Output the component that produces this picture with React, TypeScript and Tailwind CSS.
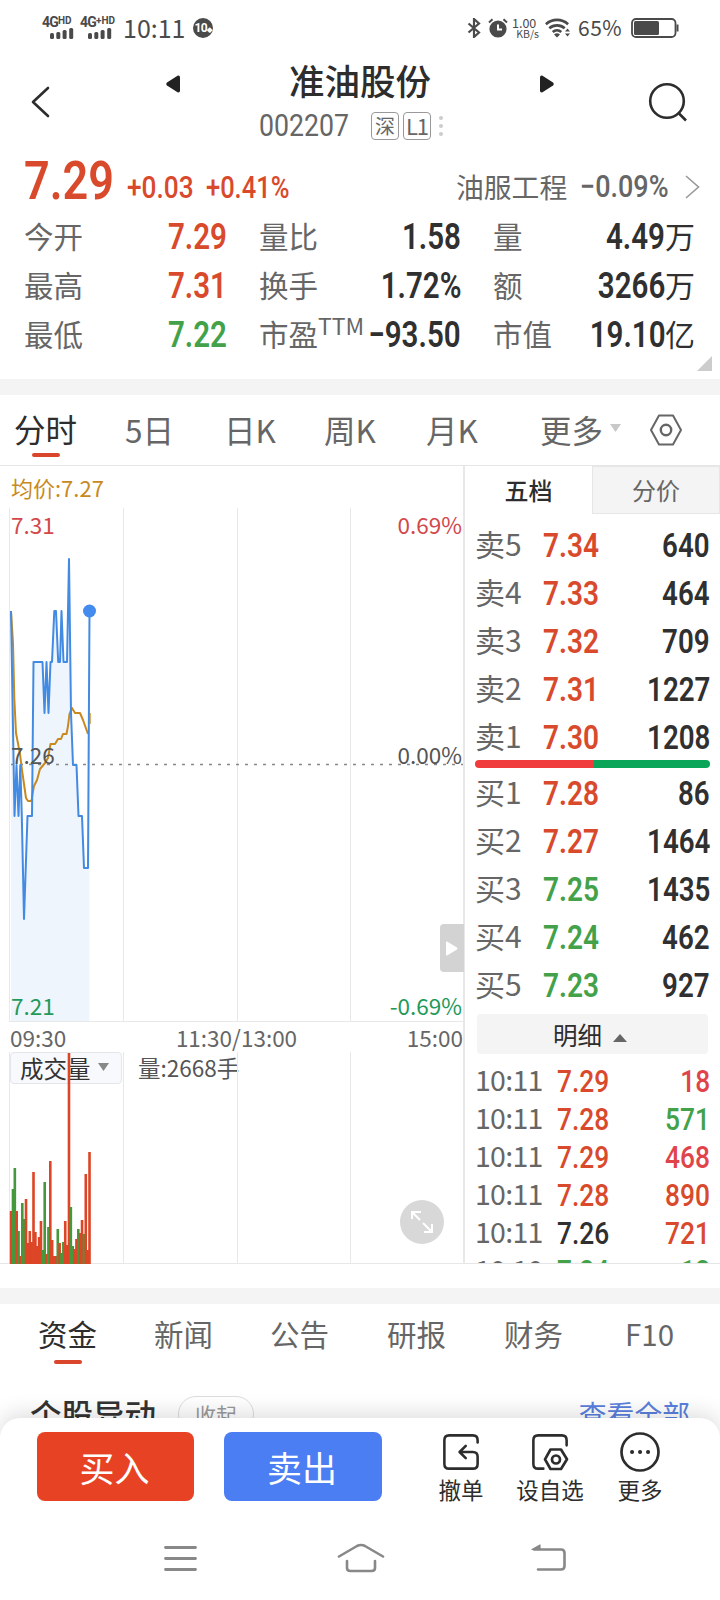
import type { ReactNode } from 'react';
import { clsx } from 'clsx';

const CJK = 'font-["Noto_Sans_CJK_SC",sans-serif]';
const RED = 'text-[#d9492c]';
const GREEN = 'text-[#43a249]';
const DARK = 'text-[#303030]';

const ASKS = [
  { label: '卖5', price: '7.34', vol: '640' },
  { label: '卖4', price: '7.33', vol: '464' },
  { label: '卖3', price: '7.32', vol: '709' },
  { label: '卖2', price: '7.31', vol: '1227' },
  { label: '卖1', price: '7.30', vol: '1208' },
];

const BIDS = [
  { label: '买1', price: '7.28', vol: '86' },
  { label: '买2', price: '7.27', vol: '1464' },
  { label: '买3', price: '7.25', vol: '1435', down: true },
  { label: '买4', price: '7.24', vol: '462', down: true },
  { label: '买5', price: '7.23', vol: '927', down: true },
];

const TICKS = [
  { time: '10:11', price: '7.29', vol: '18', pc: RED, vc: 'text-[#e0444a]' },
  { time: '10:11', price: '7.28', vol: '571', pc: RED, vc: GREEN },
  { time: '10:11', price: '7.29', vol: '468', pc: RED, vc: 'text-[#e0444a]' },
  { time: '10:11', price: '7.28', vol: '890', pc: RED, vc: RED },
  { time: '10:11', price: '7.26', vol: '721', pc: DARK, vc: RED },
  { time: '10:10', price: '7.24', vol: '12', pc: GREEN, vc: GREEN },
];

/** Price polyline, relative to the top-left of the chart column */
const PRICE_LINE =
  '11,103 14.5,308 16.5,257 18.5,308 20.3,257 21.8,308 24,411 27.5,308 32,308 33.5,154 42.5,154 44.5,205 46.5,154 48.5,205 50.5,154 52,154 54.3,103 56,103 58.2,154 60,154 61.5,103 63.5,154 67,154 69,51 71,205 73,257 76.5,257 78.5,308 82,308 84,360 88,360 89.5,103';

const AVG_LINE =
  '11,103 13,135 14.3,190 16,225 20,246 22,262 24,276 26,290 28,293 31.5,293 32.5,286 34,278 37,272 40,261 45,255 48,250 50.5,236 55,236 58,231 61,231 63,226 66.5,226 68,218 69.5,206 72,200 75,205 80,205 83,212 88,226';

/** Per-minute volume: [height, rising] */
const VOLUMES: [number, boolean][] = [
  [53, true], [75, false], [96, false], [53, true], [33, false], [8, true],
  [61, false], [45, false], [65, true], [21, true], [33, true], [22, true],
  [92, true], [32, true], [18, true], [27, true], [43, true], [14, false],
  [82, false], [10, true], [37, false], [103, true], [24, true], [8, true],
  [8, true], [35, false], [21, true], [11, false], [22, false], [43, true],
  [19, true], [211, true], [57, false], [18, false], [15, true], [25, true],
  [35, false], [31, true], [44, true], [30, false], [90, true], [14, true],
  [112, true],
];

/** Condensed figures used for quotes */
function Num({ children, className }: { children: ReactNode; className?: string }) {
  return (
    <span className={clsx('inline-block shrink-0 font-[Roboto,sans-serif] leading-none', className)}>
      {children}
    </span>
  );
}

function Signal({ label, sup, className }: { label: string; sup: string; className?: string }) {
  return (
    <div className={clsx('flex flex-col', className)}>
      <div className="flex h-[10px] items-start font-[Roboto,sans-serif] text-[14px] leading-[10px] font-bold whitespace-nowrap">
        <span className="tracking-[-0.8px]">{label}</span>
        <span className="text-[10px] leading-[7px]">{sup}</span>
      </div>
      <svg width="24" height="12" className="ml-2" fill="currentColor">
        <rect x="0" y="6" width="4" height="6" rx="1.5" />
        <rect x="6.3" y="5" width="4" height="7" rx="1.5" />
        <rect x="12.6" y="3" width="4" height="9" rx="1.5" />
        <rect x="19.2" y="1" width="4" height="11" rx="1.5" />
      </svg>
    </div>
  );
}

function StatusBar() {
  return (
    <div className="flex h-14 items-center pl-[42px] text-[#4a4a4a]">
      <Signal label="4G" sup="HD" className="w-[38px]" />
      <Signal label="4G" sup="+HD" className="w-[43px]" />
      <div className="-mt-0.5 w-[70px] text-[25px] leading-none">10:11</div>
      <div className="flex size-5 items-center justify-center rounded-full bg-[#4a4a4a] font-[Roboto,sans-serif] text-[12px] font-bold tracking-tighter text-white">
        10<span className="mt-1 text-[7px]">◆</span>
      </div>
      <svg width="14" height="20" viewBox="0 0 14 20" className="ml-[254px]" fill="none" stroke="currentColor" strokeWidth="2.200">
        <path d="M1.5 5.5 12 14.5 7 19V1l5 4.5L1.5 14.5" />
      </svg>
      <svg width="20" height="20" viewBox="0 0 20 20" className="ml-[7px]">
        <circle cx="10" cy="11" r="8.6" fill="currentColor" />
        <path d="M1 4.5 4.5 1.3M19 4.5l-3.500-3.200" stroke="currentColor" strokeWidth="2" />
        <path d="M10 6.500v5h4" stroke="#fff" strokeWidth="2" fill="none" />
      </svg>
      <div className="ml-[4px] w-[27px]">
        <div className="text-[12.500px] leading-[10px]">1.00</div>
        <div className="mt-px text-right text-[10.500px] leading-[10px]">KB/s</div>
      </div>
      <svg width="26" height="20" viewBox="0 0 26 20" className="ml-1.5" fill="none" stroke="currentColor" strokeWidth="2.600">
        <path d="M.9 6.200a16.500 16.500 0 0 1 22.200 0M4.300 10.300a11.500 11.500 0 0 1 15.400 0M7.700 14a6.500 6.500 0 0 1 8.600 0" />
        <path d="m12 19.500-3-3a4.500 4.500 0 0 1 6 0ZM22.500 10.500l2.500 3h-5zM22.500 18.500l2.500-3h-5z" fill="currentColor" stroke="none" />
      </svg>
      <div className="-mt-px ml-[7px] w-[53px] text-[21px] leading-none tracking-[0.5px]">65%</div>
      <svg width="48" height="20" viewBox="0 0 48 20">
        <rect x="1" y="1" width="43.500" height="18" rx="4" fill="none" stroke="currentColor" strokeWidth="1.800" />
        <rect x="3" y="3" width="25" height="14" rx="1.500" fill="currentColor" />
        <path d="M46.500 6.500v7" stroke="currentColor" strokeWidth="2" />
      </svg>
    </div>
  );
}

function Header() {
  return (
    <div className="flex h-[94px] text-[#2d2d2d]">
      <svg width="20" height="34" viewBox="0 0 20 34" className="mt-[29px] ml-[31px]" fill="none" stroke="currentColor" strokeWidth="2.600" strokeLinecap="round" strokeLinejoin="round">
        <path d="M17 3 2 17l15 14" />
      </svg>
      <svg width="15" height="18" viewBox="0 0 15 18" className="mt-[19px] ml-[115px]" fill="#222">
        <path d="M1 7.500 11.500.700Q14 0 14 2.500v13q0 2.500-2.500 1.800L1 10.500q-1.500-1.500 0-3Z" />
      </svg>
      <div className="ml-[78px] w-[188px]">
        <div className="mt-[3px] ml-[30px] h-[42px] text-[35.500px] leading-[42px] font-medium whitespace-nowrap">准油股份</div>
        <div className="mt-[11px] flex h-7 items-center text-[#666]">
          <div className="w-[112px]">
            <Num className="-mt-0.5 origin-left scale-x-[0.86] text-[31px]">002207</Num>
          </div>
          <span className="flex size-7 shrink-0 items-center justify-center rounded border border-[#999] pb-px text-[20px] leading-none">深</span>
          <span className="ml-1 flex size-7 shrink-0 items-center justify-center rounded border border-[#999] pb-[3px] text-[22px] leading-none tracking-tighter">L1</span>
          <div className="ml-2 flex shrink-0 flex-col gap-1">
            <i className="size-1 rounded-full bg-[#ccc]" />
            <i className="size-1 rounded-full bg-[#ccc]" />
            <i className="size-1 rounded-full bg-[#ccc]" />
          </div>
        </div>
      </div>
      <svg width="15" height="18" viewBox="0 0 15 18" className="mt-[19px] ml-[92px]" fill="#222">
        <path d="M14 7.500 3.500.700Q1 0 1 2.500v13q0 2.500 2.500 1.800L14 10.500q1.500-1.500 0-3Z" />
      </svg>
      <svg width="40" height="40" viewBox="0 0 40 40" className="mt-[26px] ml-[94px]" fill="none" stroke="currentColor" strokeWidth="2.600">
        <circle cx="19" cy="19" r="16.800" />
        <path d="m31 31.500 7 7" />
      </svg>
    </div>
  );
}

function Stat({ label, sup, value, unit, color = DARK }: {
  label: string; sup?: string; value: string; unit?: string; color?: string;
}) {
  return (
    <div className="flex h-[49px] items-center justify-between">
      <span className="relative text-[29.5px] leading-none whitespace-nowrap text-[#666]">
        {label}
        {sup && <span className="absolute -top-[5px] left-full text-[23px] leading-none">{sup}</span>}
      </span>
      <span className={clsx('flex items-center text-[30px]', color)}>
        <Num className="mt-0.5 origin-right scale-x-[0.82] text-[36px] font-[570]">{value}</Num>
        {unit && <span className="-mt-0.5 leading-none">{unit}</span>}
      </span>
    </div>
  );
}

function Quote() {
  return (
    <div className="relative h-[229px]">
      <div className={clsx('flex h-[61px] items-end pl-[24px]', RED)}>
        <div className="w-[103px]">
          <Num className="mb-[3px] origin-left scale-x-[0.85] text-[53px] font-[640]">7.29</Num>
        </div>
        <div className="mb-[8px] w-[79px]"><Num className="origin-left scale-x-[0.86] text-[30.500px] font-medium">+0.03</Num></div>
        <div className="mb-[8px] w-[174px]"><Num className="origin-left scale-x-[0.835] text-[30.500px] font-medium">+0.41%</Num></div>
        <div className="mb-[9px] ml-[76px] flex items-center text-[#666]">
          <span className="w-[124px] text-[27.800px] leading-none">油服工程</span>
          <div className="w-[105px]"><Num className="origin-left scale-x-[0.87] text-[31px] font-medium">−0.09%</Num></div>
          <svg width="16" height="26" viewBox="0 0 16 26" fill="none" stroke="#999" strokeWidth="1.600">
            <path d="m1 2 12.500 11L1 24" />
          </svg>
        </div>
      </div>
      <div className="grid grid-cols-[203px_202px_202px] gap-x-[32px] pl-[24px]">
        <Stat label="今开" value="7.29" color={RED} />
        <Stat label="量比" value="1.58" />
        <Stat label="量" value="4.49" unit="万" />
        <Stat label="最高" value="7.31" color={RED} />
        <Stat label="换手" value="1.72%" />
        <Stat label="额" value="3266" unit="万" />
        <Stat label="最低" value="7.22" color={GREEN} />
        <Stat label="市盈" sup="TTM" value="−93.50" />
        <Stat label="市值" value="19.10" unit="亿" />
      </div>
      <svg width="15" height="15" className="absolute right-2 bottom-2" fill="#ccc">
        <path d="M15 0v15H0z" />
      </svg>
    </div>
  );
}

function PeriodTabs() {
  return (
    <div className="flex h-[71px] items-center border-b border-[#e6e6e6] pl-[14px] text-[31.500px] leading-none text-[#666]">
      <div className="relative w-[111px] text-[#2d2d2d]">
        <div className="-mt-0.5">分时</div>
        <i className="absolute -bottom-[12px] left-[18px] h-1 w-7 rounded-full bg-[#d9462c]" />
      </div>
      <div className="w-[99px]">5日</div>
      <div className="w-[100px]">日K</div>
      <div className="w-[102px]">周K</div>
      <div className="w-[114px]">月K</div>
      <div className="w-[70px]">更多</div>
      <svg width="11" height="8" className="-mt-1" fill="#c8c8c8"><path d="M0 0h11L5.500 8z" /></svg>
      <svg width="32" height="32" viewBox="0 0 32 32" className="-mt-px ml-[29px]" fill="none" stroke="#666" strokeWidth="2" strokeLinejoin="round">
        <path d="M9 1.500h14L31 16l-8 14.500H9L1 16z" />
        <circle cx="16" cy="16" r="5.200" strokeWidth="2.400" />
      </svg>
    </div>
  );
}

function ChartColumn() {
  return (
    <div className="w-[465px] shrink-0 border-r-2 border-[#e8e8e8]">
      <div className="h-[42px] pl-[11px] text-[22px] leading-[43px] text-[#c88a20]">均价:7.27</div>

      {/* Intraday line */}
      <div className="relative h-[514px]">
        <svg width="463" height="514" fill="none">
          <g stroke="#e8e8e8">
            <path d="M9.500 0v513M123.500 0v513M237.500 0v513M350.500 0v513M9 513.500h454" />
          </g>
          <polygon points={`11,513 ${PRICE_LINE} 89.500,513`} fill="#3d8bee" fillOpacity="0.09" />
          <path d="M11 256.500h452" stroke="#888" strokeWidth="1.500" strokeDasharray="3 6" />
          <polyline points={AVG_LINE} stroke="#c88a20" strokeWidth="2" strokeLinejoin="round" />
          <path d="M90.200 205v11" stroke="#c88a20" />
          <polyline points={PRICE_LINE} stroke="#438be2" strokeWidth="2" strokeLinejoin="round" />
          <circle cx="89.500" cy="103" r="6.500" fill="#438bee" />
        </svg>
        <div className="absolute inset-x-0 top-0 h-full pr-px pl-[11px] text-[22.500px] leading-none">
          <div className="mt-[5px] flex justify-between text-[#d2484b]"><span>7.31</span><span>0.69%</span></div>
          <div className="mt-[207px] flex justify-between text-[#555]"><span>7.26</span><span>0.00%</span></div>
          <div className="mt-[229px] flex justify-between text-[#1f9a5b]"><span>7.21</span><span>-0.69%</span></div>
        </div>
        <div className="absolute top-[416px] right-[-1px] flex h-12 w-6 items-center justify-center rounded-l bg-[#d3d3d3]">
          <svg width="12" height="15" fill="#fff"><path d="M0 1.500Q0 0 1.500.700l9.500 5.800q1 1 0 2l-9.500 5.800Q0 15 0 13.500z" /></svg>
        </div>
      </div>

      <div className="flex h-[30px] items-center justify-between pt-px pl-[10px] text-[22.500px] leading-none text-[#666]">
        <span>09:30</span>
        <span>11:30/13:00</span>
        <span>15:00</span>
      </div>

      {/* Volume */}
      <div className="relative h-[212px]">
        <div className="absolute top-0 left-[10px] flex h-8 w-[112px] items-center rounded border border-[#e4e6ec] bg-[#f8f9fd] pt-0.5 pl-[9px] text-[23.500px] leading-none text-[#333]">
          成交量
          <svg width="11" height="8" className="mb-1 ml-[7px]" fill="#888"><path d="M0 0h11L5.500 8z" /></svg>
        </div>
        <div className="absolute top-[4px] left-[138px] text-[22.500px] leading-none text-[#555]">量:2668手</div>
        <svg width="463" height="212" className="relative" fill="none">
          <path d="M9.500 0v211M123.500 0v211M237.500 0v211M350.500 0v211M9 211.500h454" stroke="#e8e8e8" />
          {VOLUMES.map(([h, up], i) => (
            <rect key={i} x={9.8 + i * 1.867} y={212 - h} width="2.600" height={h} fill={up ? '#dc4526' : '#45983c'} />
          ))}
        </svg>
        <div className="absolute right-[19px] bottom-[20px] flex size-11 items-center justify-center rounded-full bg-[#d8d8d8]">
          <svg width="22" height="22" viewBox="0 0 22 22" fill="none" stroke="#fff" strokeWidth="2">
            <path d="M1 8V1h9M1 1l8 8M12 12l9 9M21 13v8h-8" />
          </svg>
        </div>
      </div>
    </div>
  );
}

function LevelRow({ label, price, vol, down }: { label: string; price: string; vol: string; down?: boolean }) {
  return (
    <div className="flex h-12 items-center">
      <span className="-mt-[3px] w-[68px] text-[30px] leading-none text-[#666]">{label}</span>
      <Num className={clsx('mt-0.5 origin-left scale-x-[0.85] text-[33px] font-[570]', down ? GREEN : RED)}>{price}</Num>
      <Num className={clsx('mt-0.5 ml-auto origin-right scale-x-[0.84] text-[33px] font-[570]', DARK)}>{vol}</Num>
    </div>
  );
}

function OrderBook() {
  return (
    <div className="h-[797px] flex-1 overflow-hidden">
      <div className="flex h-[48px] text-[24px] leading-none">
        <div className="flex flex-1 items-center justify-center font-medium text-[#2d2d2d]">五档</div>
        <div className="flex w-32 items-center justify-center border border-[#e6e6e6] bg-[#f4f4f4] text-[#666]">分价</div>
      </div>
      <div className="mt-[6px] pr-[10px] pl-[10px]">
        {ASKS.map((r) => <LevelRow key={r.label} {...r} />)}
      </div>
      <div className="mr-[10px] ml-[10px] flex h-2 overflow-hidden rounded-full">
        <div className="w-[119px] bg-[#f03c3c]" />
        <div className="flex-1 bg-[#0ba559]" />
      </div>
      <div className="pr-[10px] pl-[10px]">
        {BIDS.map((r) => <LevelRow key={r.label} {...r} />)}
      </div>
      <div className="mt-[6px] mr-3 ml-3 flex h-10 items-center justify-center rounded bg-[#f4f4f4] pt-0.5 pr-[5px] text-[24.500px] leading-none text-[#2d2d2d]">
        明细
        <svg width="14" height="8" className="mt-1.5 ml-[11px]" fill="#666"><path d="M7 0 14 8H0z" /></svg>
      </div>
      <div className="mt-[7px] pr-[10px] pl-[10px]">
        {TICKS.map((t, i) => (
          <div key={i} className="flex h-[38px] items-center">
            <span className="-mt-[1px] w-[82px] text-[28.500px] leading-none tracking-[-0.700px] text-[#666]">{t.time}</span>
            <Num className={clsx('mt-0.5 origin-left scale-x-[0.85] text-[31px] font-[530]', t.pc)}>{t.price}</Num>
            <Num className={clsx('mt-0.5 ml-auto origin-right scale-x-[0.85] text-[31px] font-[530]', t.vc)}>{t.vol}</Num>
          </div>
        ))}
      </div>
    </div>
  );
}

function InfoTabs() {
  return (
    <div className="h-[114px] overflow-hidden">
      <div className="flex h-[62px] items-center pb-0.5 pl-[38px] text-[29.500px] leading-none text-[#666]">
        <div className="relative w-[116px] text-[#2d2d2d]">
          资金
          <i className="absolute -bottom-[15px] left-4 h-1 w-7 rounded-full bg-[#d9462c]" />
        </div>
        <div className="w-[116px]">新闻</div>
        <div className="w-[117px]">公告</div>
        <div className="w-[117px]">研报</div>
        <div className="w-[121px]">财务</div>
        <div>F10</div>
      </div>
      <div className="mt-[30px] flex h-9 items-center pr-[30px] pl-[30px]">
        <span className="text-[31.500px] leading-none font-medium text-[#333]">个股异动</span>
        <span className="ml-[22px] flex h-9 w-[76px] items-center justify-center rounded-full border border-[#ddd] text-[21px] leading-none text-[#999]">收起</span>
        <span className="ml-auto text-[27.800px] leading-none text-[#5a80dd]">查看全部</span>
      </div>
    </div>
  );
}

function Action({ label, className, children }: { label: string; className?: string; children: ReactNode }) {
  return (
    <div className={clsx('flex shrink-0 flex-col items-center text-[22.500px] leading-none whitespace-nowrap text-[#2d2d2d]', className)}>
      <svg width="40" height="40" viewBox="0 0 40 40" fill="none" stroke="currentColor" strokeWidth="2.700" strokeLinecap="round" strokeLinejoin="round">
        {children}
      </svg>
      <span className="mt-[6px]">{label}</span>
    </div>
  );
}

function BottomBar() {
  return (
    <div className="relative h-[182px] rounded-t-[20px] bg-white pt-[14px] shadow-[0_-4px_22px_rgba(0,0,0,0.14)]">
      <div className="flex h-[69px] pl-[37px] text-[35px] leading-none text-white">
        <button className="h-[69px] w-[157px] rounded-lg bg-[#e84225] pr-0.5">买入</button>
        <button className="ml-[30px] h-[69px] w-[158px] rounded-lg bg-[#4b7df3] pr-0.5">卖出</button>
        <Action label="撤单" className="ml-[47px] w-16">
          <path d="M37.500 10V7.500q0-5-5-5h-25q-5 0-5 5v25q0 5 5 5h25q5 0 5-5V25q0-5-5-5H19M25 13.500 18.500 20l6.500 6.500" transform="translate(1 1) scale(.95)" />
        </Action>
        <Action label="设自选" className="ml-[19px] w-[76px]">
          <path d="M13 37.500H7.500q-5 0-5-5v-25q0-5 5-5h25q5 0 5 5V13" transform="translate(1 1) scale(.95)" />
          <path d="M20.500 17.500h10.500l6 9.800-6 9.700H20.500l-5.500-9.700z" />
          <circle cx="26" cy="27.500" r="4" />
        </Action>
        <Action label="更多" className="ml-[27px] w-[50px]">
          <circle cx="20" cy="20" r="18.500" />
          <path d="M12 20h.1M20 20h.1M28 20h.1" strokeWidth="4" />
        </Action>
      </div>
      <div className="flex pt-[42px] text-[#888]">
        <svg width="34" height="30" className="ml-[164px]" fill="none" stroke="currentColor" strokeWidth="2.800" strokeLinecap="round">
          <path d="M1.500 4.500h30M1.500 15.500h30M1.500 26.500h30" />
        </svg>
        <svg width="48" height="30" className="ml-[139px]" fill="none" stroke="currentColor" strokeWidth="2.600" strokeLinecap="round" strokeLinejoin="round">
          <path d="M2 13.500 20 3q4-2 8 0L46 13.500M10 18v7q0 3 3.500 3h21q3.500 0 3.500-3v-7" />
        </svg>
        <svg width="36" height="30" className="ml-[146px]" fill="none" stroke="currentColor" strokeWidth="2.600" strokeLinecap="round" strokeLinejoin="round">
          <path d="M3 6.500h27q3.500 0 3.500 3.500v13q0 3.500-3.500 3.500H7" />
          <path d="M1 6.500 9 2v4.500z" fill="currentColor" strokeWidth="1.200" />
        </svg>
      </div>
    </div>
  );
}

export default function App() {
  return (
    <div className={clsx('h-[1600px] w-[720px] overflow-hidden bg-white', CJK)}>
      <StatusBar />
      <Header />
      <Quote />
      <div className="h-4 bg-[#f4f4f4]" />
      <PeriodTabs />
      <div className="flex h-[798px] border-b border-[#e6e6e6]">
        <ChartColumn />
        <OrderBook />
      </div>
      <div className="mt-6 h-4 bg-[#f4f4f4]" />
      <InfoTabs />
      <BottomBar />
    </div>
  );
}
